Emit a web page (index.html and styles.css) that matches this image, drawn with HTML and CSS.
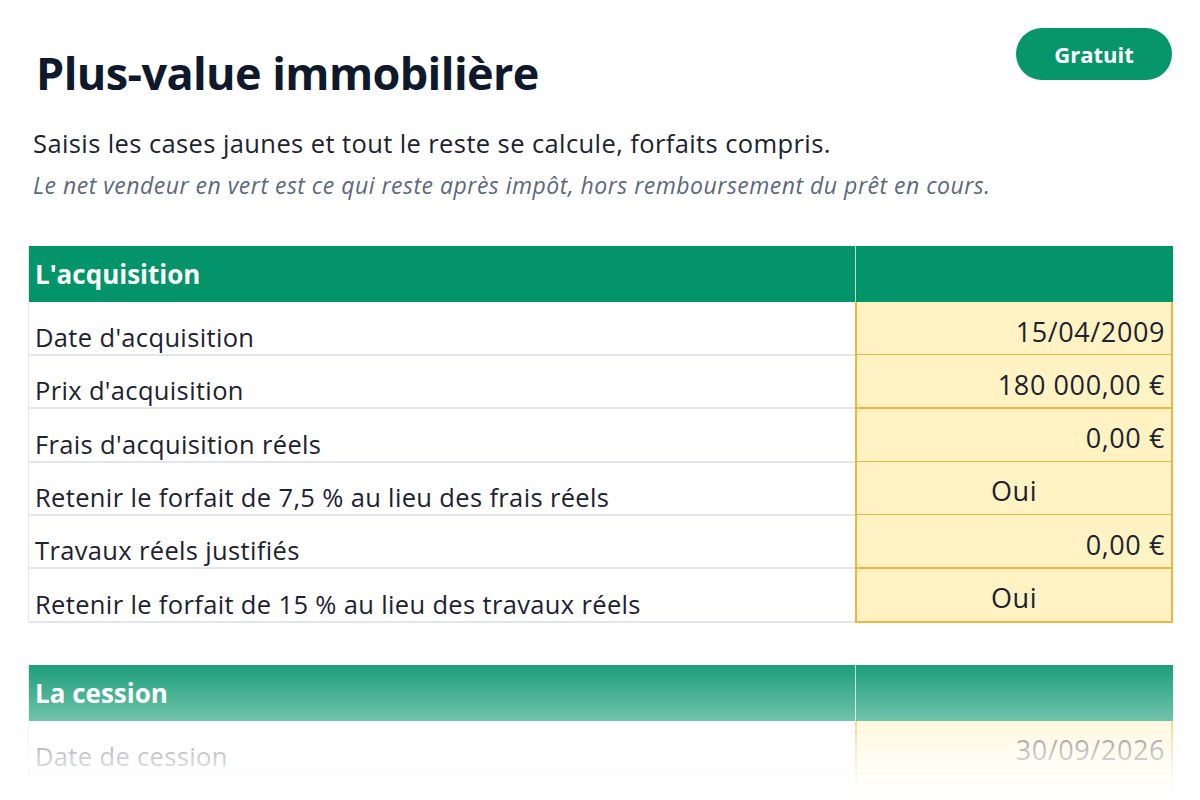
FILE: index.html
```html
<!DOCTYPE html>
<html lang="fr">
<head>
<meta charset="utf-8">
<title>Plus-value immobilière</title>
<link rel="stylesheet" href="styles.css">
</head>
<body>
<div class="page">
  <header class="top">
    <h1 class="title">Plus-value immobilière</h1>
    <span class="badge">Gratuit</span>
  </header>
  <p class="lead">Saisis les cases jaunes et tout le reste se calcule, forfaits compris.</p>
  <p class="note">Le net vendeur en vert est ce qui reste après impôt, hors remboursement du prêt en cours.</p>

  <section class="sheet">
    <div class="head"><span class="head-label">L'acquisition</span><span class="head-value"></span></div>
    <div class="row"><span class="label">Date d'acquisition</span><span class="value">15/04/2009</span></div>
    <div class="row"><span class="label">Prix d'acquisition</span><span class="value">180 000,00 €</span></div>
    <div class="row"><span class="label">Frais d'acquisition réels</span><span class="value">0,00 €</span></div>
    <div class="row"><span class="label">Retenir le forfait de 7,5 % au lieu des frais réels</span><span class="value center">Oui</span></div>
    <div class="row"><span class="label">Travaux réels justifiés</span><span class="value">0,00 €</span></div>
    <div class="row"><span class="label">Retenir le forfait de 15 % au lieu des travaux réels</span><span class="value center">Oui</span></div>
  </section>

  <section class="sheet second">
    <div class="head"><span class="head-label">La cession</span><span class="head-value"></span></div>
    <div class="row"><span class="label">Date de cession</span><span class="value">30/09/2026</span></div>
    <div class="row empty"><span class="label"></span><span class="value"></span></div>
  </section>
</div>
<div class="fade"></div>
</body>
</html>
```
FILE: styles.css
```css
html, body {
  margin: 0;
  padding: 0;
  background: #ffffff;
  overflow: hidden;
  height: 800px;
}
body {
  font-family: "Open Sans", Lato, sans-serif;
  color: #1d2230;
}
.page {
  padding: 28px 27px 0 28px;
}
.top {
  display: flex;
  justify-content: space-between;
  align-items: flex-start;
}
.title {
  margin: 17px 0 0 8px;
  font-size: 45px;
  line-height: 56px;
  font-weight: 700;
  color: #0e1a2c;
  letter-spacing: -0.6px;
}
.badge {
  display: flex;
  align-items: center;
  justify-content: center;
  width: 156px;
  height: 52px;
  margin-right: 1px;
  border-radius: 26px;
  background: #07966a;
  color: #ffffff;
  font-weight: 700;
  font-size: 22px;
}
.lead {
  margin: 26px 0 0 5px;
  font-size: 25.5px;
  line-height: 32px;
  letter-spacing: 0.4px;
  color: #1d2230;
}
.note {
  margin: 12px 0 0 5px;
  font-size: 23px;
  line-height: 28px;
  letter-spacing: 0.5px;
  font-style: italic;
  color: #5c687e;
}
.sheet {
  margin-top: 47px;
  border-left: 1px solid #e3e7eb;
}
.sheet.second {
  margin-top: 43px;
}
.head, .row {
  display: grid;
  grid-template-columns: 826px 318px;
}
.head {
  height: 56px;
  background: #03946a;
  color: #ffffff;
  font-weight: 700;
  font-size: 26px;
}
.head-label {
  display: flex;
  align-items: center;
  padding-left: 6px;
}
.head-value {
  border-left: 1px solid #a9e6cd;
}
.row {
  height: 53.34px;
}
.label {
  display: flex;
  align-items: center;
  padding: 18px 0 0 6px;
  font-size: 25.5px;
  letter-spacing: 0.35px;
  border-bottom: 2px solid #e3e7eb;
}
.value {
  display: flex;
  align-items: center;
  justify-content: flex-end;
  padding: 6px 6px 0 0;
  font-size: 27px;
  letter-spacing: 0.6px;
  background: #fff3c4;
  border: 2px solid #f0b540;
  border-top: 0;
  color: #1d2230;
}
.value.center {
  justify-content: center;
  padding-right: 0;
}
.fade {
  position: absolute;
  left: 0;
  right: 0;
  top: 648px;
  height: 152px;
  background: linear-gradient(to bottom,
    rgba(255,255,255,0) 0px,
    rgba(255,255,255,0.12) 20px,
    rgba(255,255,255,0.42) 70px,
    rgba(255,255,255,0.76) 107px,
    rgba(255,255,255,0.97) 140px,
    #ffffff 152px);
  pointer-events: none;
}
```
